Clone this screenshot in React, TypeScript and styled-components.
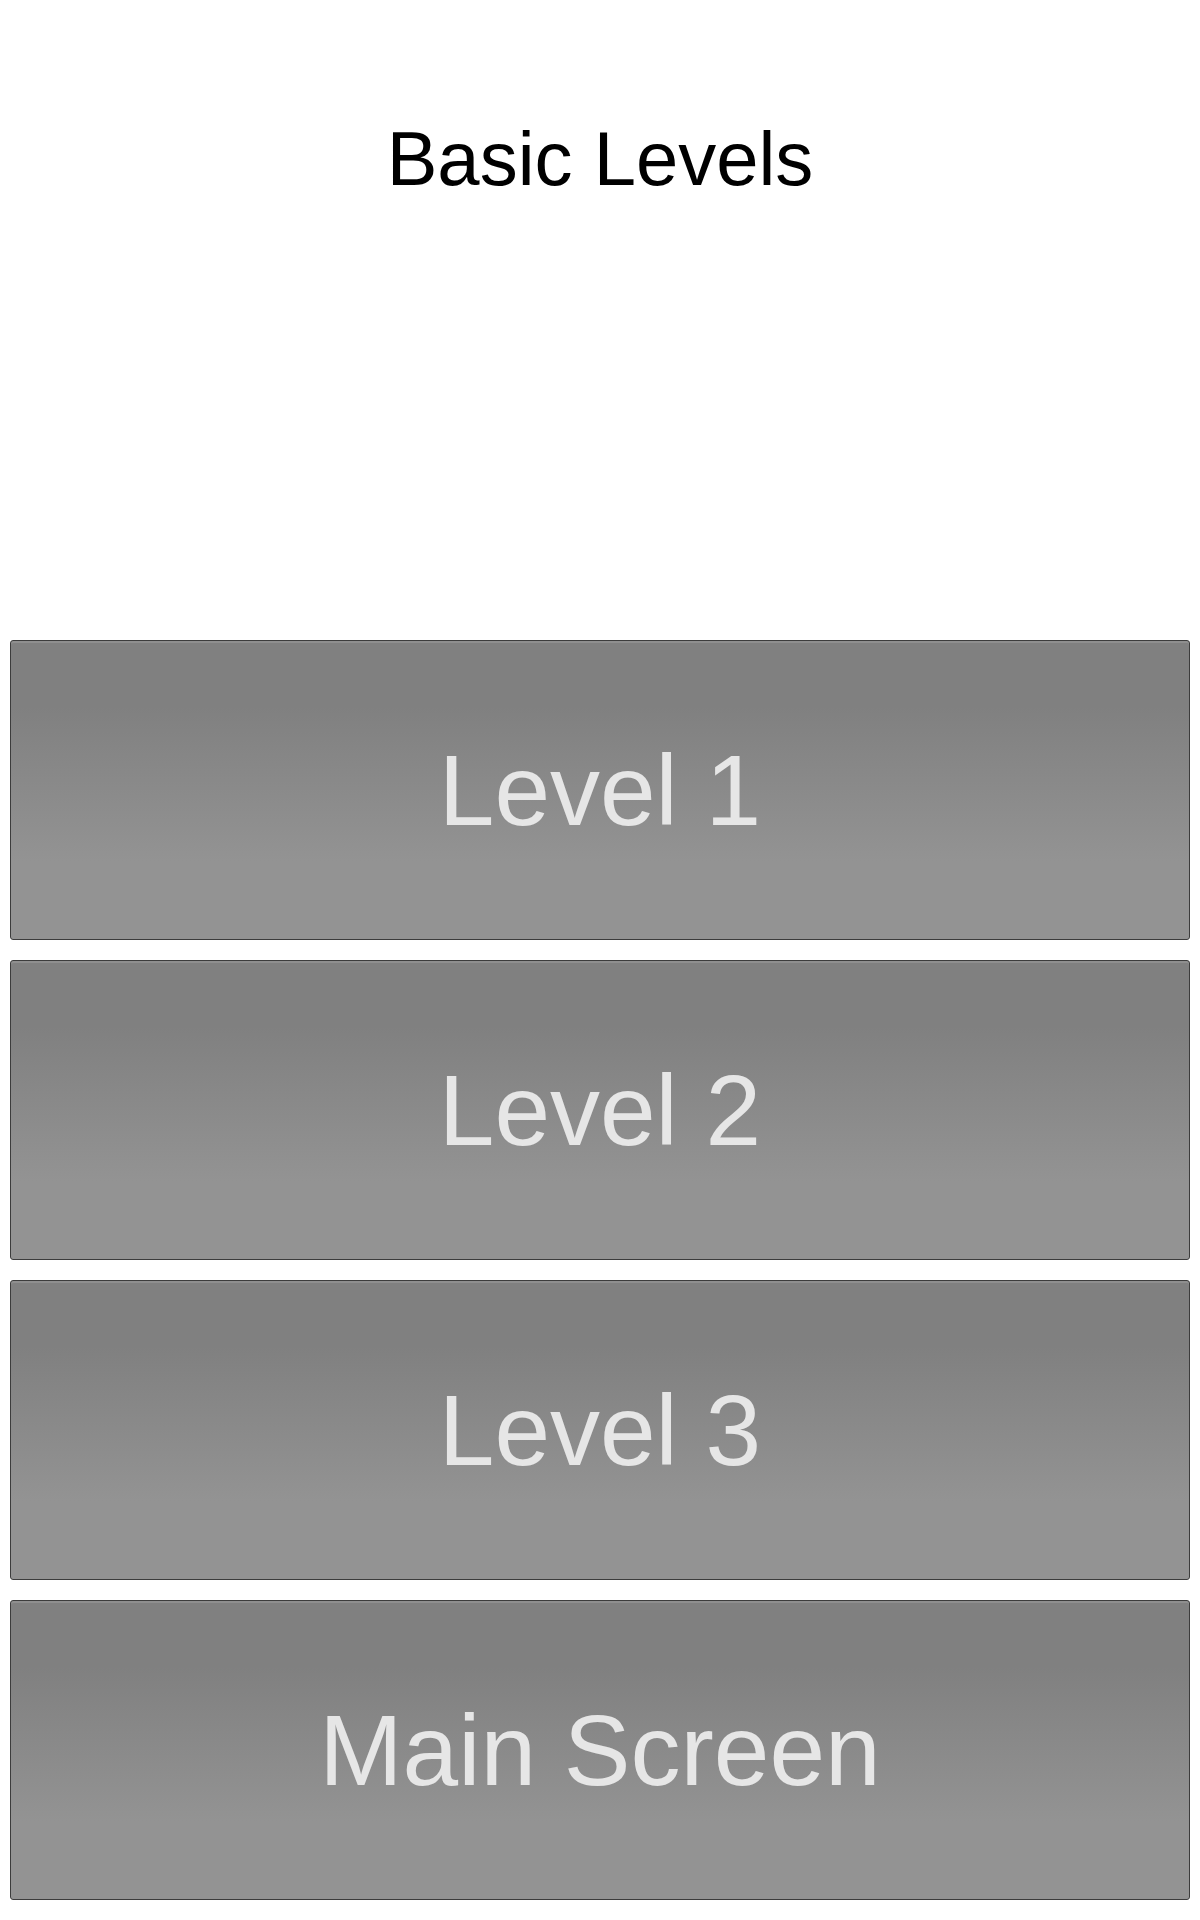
import React from "react";
import styled, { createGlobalStyle } from "styled-components";

const GlobalStyle = createGlobalStyle`
  html, body {
    margin: 0;
    padding: 0;
    background: #ffffff;
  }
  body {
    font-family: "Liberation Sans", Arial, sans-serif;
  }
`;

const Page = styled.div`
  width: 1200px;
  height: 1920px;
  display: flex;
  flex-direction: column;
  box-sizing: border-box;
  padding: 0 10px 20px;
`;

const Header = styled.div`
  height: 640px;
  display: flex;
  justify-content: center;
  align-items: flex-start;
  padding-top: 116px;
  box-sizing: border-box;
`;

const Title = styled.h1`
  margin: 0;
  font-weight: normal;
  font-size: 76px;
  line-height: 86px;
  color: #000000;
`;

const ButtonList = styled.div`
  display: flex;
  flex-direction: column;
  gap: 20px;
`;

const LevelButton = styled.button`
  height: 300px;
  width: 100%;
  box-sizing: border-box;
  border: 1px solid #3c3c3c;
  border-radius: 3px;
  background: linear-gradient(
    to bottom,
    #808080 0%,
    #808080 22%,
    #939393 74%,
    #939393 100%
  );
  box-shadow: inset 0 2px 0 #8f8f8f;
  color: #e6e6e6;
  font-family: "Liberation Sans", Arial, sans-serif;
  font-size: 100px;
  line-height: 1;
  padding: 0;
  cursor: pointer;
  display: flex;
  align-items: center;
  justify-content: center;

  &:hover {
    opacity: 0.95;
  }
`;

const buttons = ["Level 1", "Level 2", "Level 3", "Main Screen"];

const App: React.FC = () => {
  return (
    <>
      <GlobalStyle />
      <Page>
        <Header>
          <Title>Basic Levels</Title>
        </Header>
        <ButtonList>
          {buttons.map((label) => (
            <LevelButton key={label}>{label}</LevelButton>
          ))}
        </ButtonList>
      </Page>
    </>
  );
};

export default App;
